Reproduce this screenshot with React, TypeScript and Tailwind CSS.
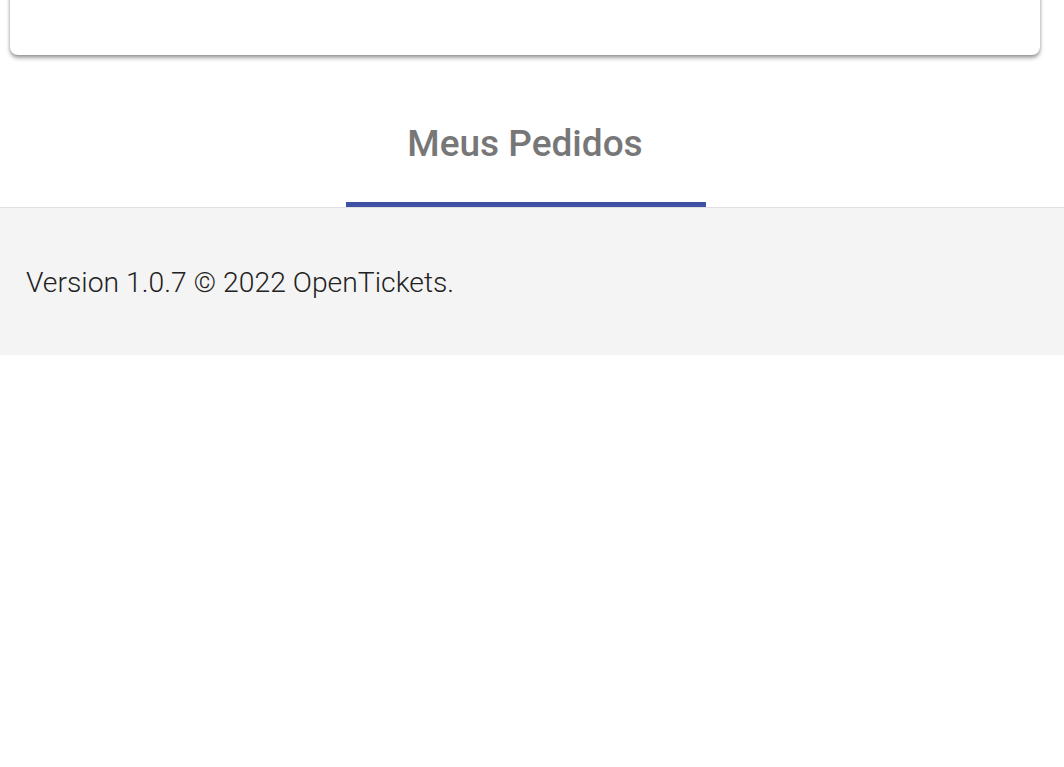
export default function App() {
  return (
    <div className="min-h-[767px] bg-white font-['Roboto',sans-serif]">
      {/* card whose top is scrolled out of view */}
      <div className="ml-[10px] mr-[24px] -mt-4 h-[71px] rounded-lg bg-white shadow-[0_3px_4px_rgba(0,0,0,0.35),0_1px_3px_rgba(0,0,0,0.15)]" />

      <div className="mt-[25px] flex justify-center border-b border-[#e0e0e0]">
        <button className="relative -ml-[12px] flex h-[127px] w-[360px] items-center justify-center pr-[2px] text-[37px] font-medium text-[#777777]">
          Meus Pedidos
          <span className="absolute bottom-0 left-0 h-[5px] w-full bg-[#3f51a5]" />
        </button>
      </div>

      <footer className="flex h-[147px] items-center bg-[#f4f4f4] px-[26px] pt-[3px]">
        <p className="text-[28.3px] font-light text-[#222222]">
          Version 1.0.7 © 2022 OpenTickets.
        </p>
      </footer>
    </div>
  );
}
